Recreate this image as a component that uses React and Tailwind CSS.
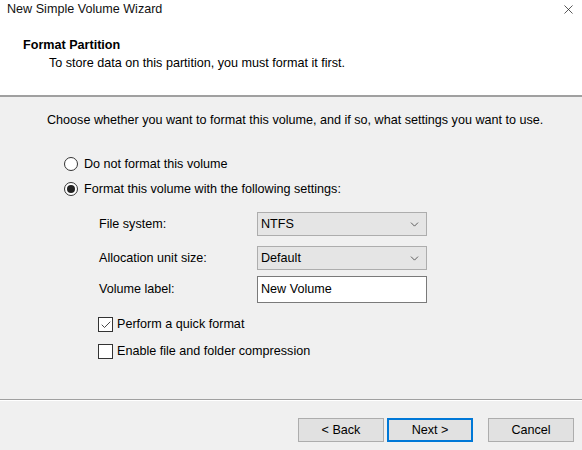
import { ChevronDown, X, Check } from "lucide-react";

function Radio({ checked }) {
  return (
    <span className="w-[14px] h-[14px] rounded-full border border-[#333] bg-white flex items-center justify-center shrink-0">
      {checked && <span className="w-[8px] h-[8px] rounded-full bg-[#222]" />}
    </span>
  );
}

function Checkbox({ checked }) {
  return (
    <span className="w-[15px] h-[15px] border border-[#333] bg-white flex items-center justify-center shrink-0">
      {checked && <Check className="w-[12px] h-[12px] text-[#333]" strokeWidth={1.8} />}
    </span>
  );
}

function Combo({ value }) {
  return (
    <div className="w-[170px] h-[24px] border border-[#adadad] bg-[#e5e5e5] flex items-center justify-between pl-[3px] pr-[5px]">
      <span>{value}</span>
      <ChevronDown className="w-[13px] h-[13px] text-[#333]" strokeWidth={1.4} />
    </div>
  );
}

function Button({ children, primary }) {
  return (
    <button
      className={
        "w-[86px] h-[24px] bg-[#e1e1e1] flex items-center justify-center " +
        (primary ? "border-2 border-[#0078d7]" : "border border-[#adadad]")
      }
    >
      {children}
    </button>
  );
}

export default function App() {
  return (
    <div
      className="w-[582px] h-[450px] bg-[#f0f0f0] flex flex-col text-[12.6px] text-black overflow-hidden"
      style={{ fontFamily: '"Liberation Sans", Arial, sans-serif' }}
    >
      <div className="bg-white h-[95px]">
        <div className="flex items-center justify-between pl-[7px] pr-[6px] h-[18px]">
          <span className="text-[#111]">New Simple Volume Wizard</span>
          <X className="w-[15px] h-[15px] text-[#222]" strokeWidth={1.2} />
        </div>
        <div className="pl-[23px] pt-[20px] font-bold leading-[14px]">Format Partition</div>
        <div className="pl-[49px] pt-[4px] leading-[14px]">
          To store data on this partition, you must format it first.
        </div>
      </div>
      <div className="h-[2px] bg-[#a0a0a0]" />

      <div className="flex-1 flex flex-col">
        <div className="pl-[47px] pt-[16px] leading-[14px]">
          Choose whether you want to format this volume, and if so, what settings you want to use.
        </div>

        <div className="pl-[64px] pt-[30px] flex flex-col gap-[11px]">
          <label className="flex items-center gap-[6px] h-[14px]">
            <Radio />
            <span>Do not format this volume</span>
          </label>
          <label className="flex items-center gap-[6px] h-[14px]">
            <Radio checked />
            <span>Format this volume with the following settings:</span>
          </label>
        </div>

        <div className="pl-[99px] pt-[16px] flex flex-col">
          <div className="flex items-center h-[24px]">
            <span className="w-[158px]">File system:</span>
            <Combo value="NTFS" />
          </div>
          <div className="flex items-center h-[24px] mt-[10px]">
            <span className="w-[158px]">Allocation unit size:</span>
            <Combo value="Default" />
          </div>
          <div className="flex items-center h-[27px] mt-[6px]">
            <span className="w-[158px]">Volume label:</span>
            <div className="w-[170px] h-[27px] border border-[#7a7a7a] bg-white flex items-center pl-[3px]">
              New Volume
            </div>
          </div>
        </div>

        <div className="pl-[98px] pt-[14px] flex flex-col gap-[12px]">
          <label className="flex items-center gap-[4px] h-[15px]">
            <Checkbox checked />
            <span>Perform a quick format</span>
          </label>
          <label className="flex items-center gap-[4px] h-[15px]">
            <Checkbox />
            <span>Enable file and folder compression</span>
          </label>
        </div>
      </div>

      <div className="h-[1px] bg-[#a0a0a0]" />
      <div className="h-[1px] bg-white" />
      <div className="h-[49px] flex items-start pt-[17px] pl-[298px]">
        <Button>&lt; Back</Button>
        <div className="w-[3px]" />
        <Button primary>Next &gt;</Button>
        <div className="w-[15px]" />
        <Button>Cancel</Button>
      </div>
    </div>
  );
}
